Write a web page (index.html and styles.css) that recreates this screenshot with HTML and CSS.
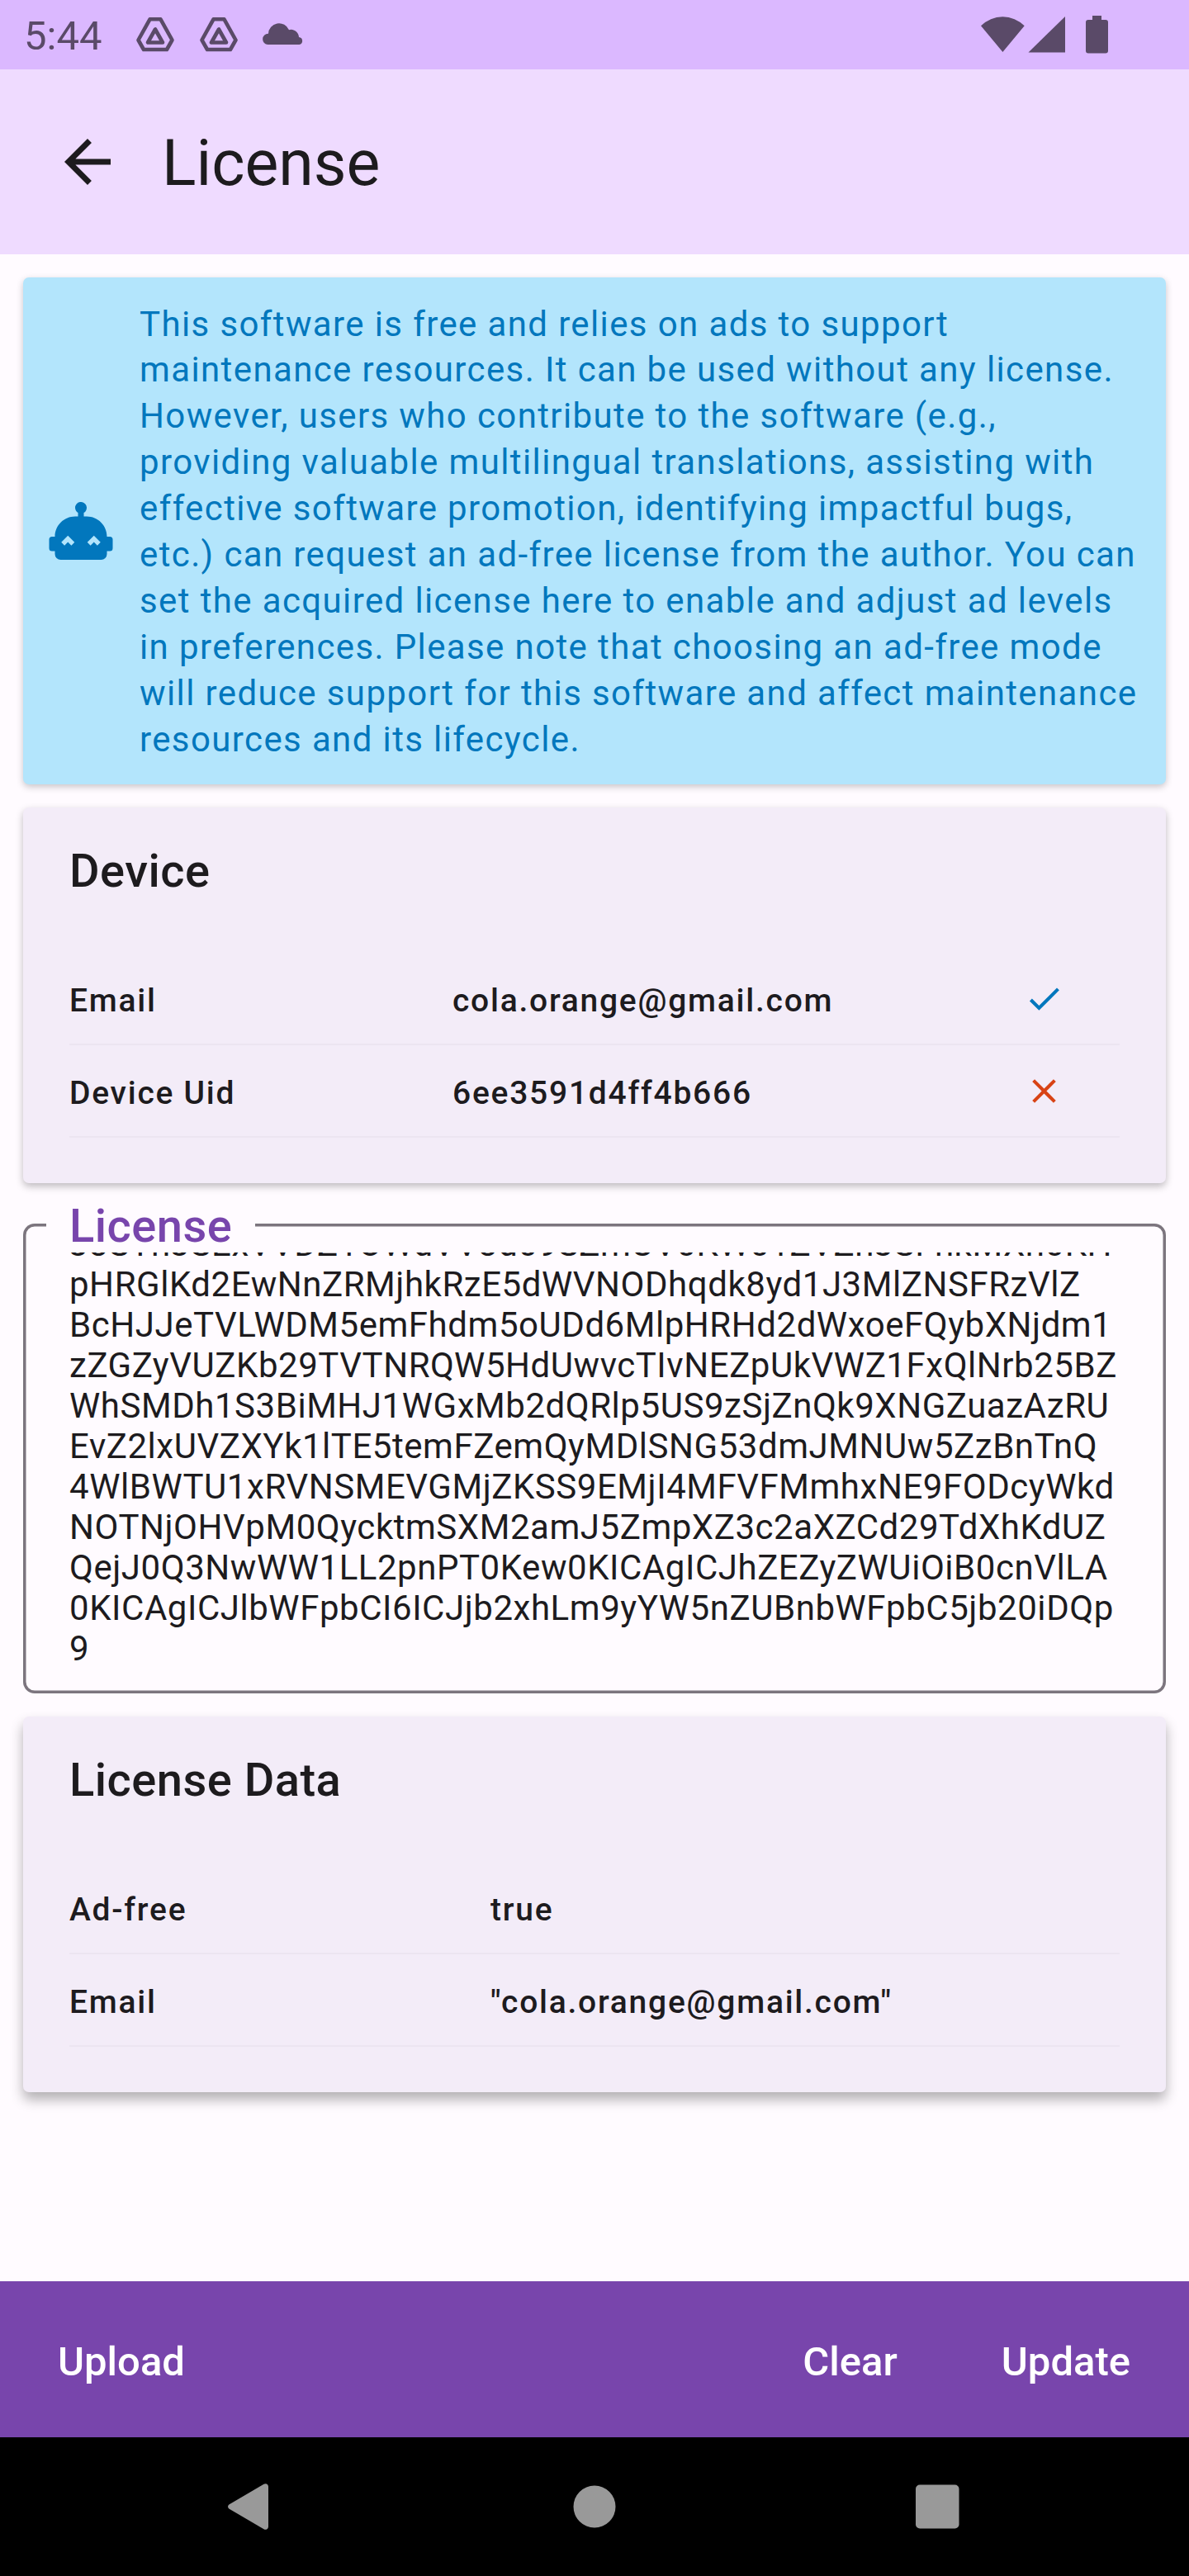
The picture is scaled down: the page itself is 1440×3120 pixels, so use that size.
FILE: index.html
```html
<!DOCTYPE html>
<html lang="en">
<head>
<meta charset="utf-8">
<title>License</title>
<link rel="stylesheet" href="styles.css">
</head>
<body>
<div class="screen">
  <div class="status-bar">
    <span class="clock">5:44</span>
    <svg class="drive" viewBox="0 0 48 44"><g fill="none" stroke="currentColor" stroke-width="4.6" stroke-linejoin="round"><path d="M17.5 3.3h13L44.5 28.500l-6.500 11.500h-28L3.500 28.500z"/><path d="M24 15.500l-9 16h18z"/></g></svg>
    <svg class="drive" viewBox="0 0 48 44"><g fill="none" stroke="currentColor" stroke-width="4.6" stroke-linejoin="round"><path d="M17.5 3.3h13L44.5 28.500l-6.500 11.500h-28L3.500 28.500z"/><path d="M24 15.500l-9 16h18z"/></g></svg>
    <svg class="cloud" viewBox="0 0 49 27"><path fill="currentColor" d="M6.500 27a6.500 6.500 0 0 1 .5-13.200A13 13 0 0 1 32 9.200a9.500 9.500 0 0 1 12 8.900A4.500 4.500 0 0 1 44.500 27z"/></svg>
    <span class="grow"></span>
    <svg class="signals" viewBox="0 0 156 48"><g fill="currentColor"><path d="M0 13.300A37 37 0 0 1 52.700 13.300L26.400 45z"/><path d="M102 2v43.500H57.500z"/><path d="M135 1h11v5h5a3 3 0 0 1 3 3v34.500a3 3 0 0 1-3 3h-21a3 3 0 0 1-3-3V9a3 3 0 0 1 3-3h5z"/></g></svg>
  </div>
  <header class="app-bar">
    <svg class="back" viewBox="0 0 24 24"><path fill="currentColor" d="M20 11H7.830l5.590-5.590L12 4l-8 8 8 8 1.410-1.410L7.830 13H20v-2z"/></svg>
    <h1>License</h1>
  </header>
  <main class="content">
    <section class="banner">
      <svg class="robot" viewBox="0 0 24 24"><path fill="currentColor" d="M22 14h-1c0-3.870-3.130-7-7-7h-1V5.730A2 2 0 1 0 10 4c0 .740.400 1.390 1 1.730V7h-1c-3.870 0-7 3.130-7 7H2a1 1 0 0 0-1 1v3a1 1 0 0 0 1 1h1v1a2 2 0 0 0 2 2h14a2 2 0 0 0 2-2v-1h1a1 1 0 0 0 1-1v-3a1 1 0 0 0-1-1M8.680 17.040 7.500 15.860l-1.180 1.180-1.110-1.110L7.500 13.640l2.290 2.290zm9 0-1.180-1.180-1.180 1.180-1.110-1.110 2.290-2.290 2.290 2.290z"/></svg>
      <p><span class="lead">This software is free and relies on ads to support</span>maintenance resources. It can be used without any license.<br>However, users who contribute to the software (e.g.,<br>providing valuable multilingual translations, assisting with<br>effective software promotion, identifying impactful bugs,<br>etc.) can request an ad-free license from the author. You can<br>set the acquired license here to enable and adjust ad levels<br>in preferences. Please note that choosing an ad-free mode<br>will reduce support for this software and affect maintenance<br>resources and its lifecycle.</p>
    </section>
    <section class="card device">
      <h2>Device</h2>
      <div class="row"><span>Email</span><span>cola.orange@gmail.com</span><svg class="mark ok" viewBox="0 0 24 24"><path fill="currentColor" d="M9 16.170 4.830 12l-1.420 1.410L9 19 21 7l-1.410-1.410z"/></svg></div>
      <div class="row"><span>Device Uid</span><span>6ee3591d4ff4b666</span><svg class="mark bad" viewBox="0 0 24 24"><path fill="currentColor" d="M19 6.410 17.590 5 12 10.590 6.410 5 5 6.410 10.590 12 5 17.590 6.410 19 12 13.410 17.590 19 19 17.590 13.410 12z"/></svg></div>
    </section>
    <section class="field">
      <span class="field-label">License</span>
      <div class="field-text"><p>J3SYhJSExVVDZ1OWdVV3d09SZmUV0KW01ZVZhJSFhkMXh0KH<br>pHRGlKd2EwNnZRMjhkRzE5dWVNODhqdk8yd1J3MlZNSFRzVlZ<br>BcHJJeTVLWDM5emFhdm5oUDd6MlpHRHd2dWxoeFQybXNjdm1<br>zZGZyVUZKb29TVTNRQW5HdUwvcTIvNEZpUkVWZ1FxQlNrb25BZ<br>WhSMDh1S3BiMHJ1WGxMb2dQRlp5US9zSjZnQk9XNGZuazAzRU<br>EvZ2lxUVZXYk1lTE5temFZemQyMDlSNG53dmJMNUw5ZzBnTnQ<br>4WlBWTU1xRVNSMEVGMjZKSS9EMjI4MFVFMmhxNE9FODcyWkd<br>NOTNjOHVpM0QycktmSXM2amJ5ZmpXZ3c2aXZCd29TdXhKdUZ<br>QejJ0Q3NwWW1LL2pnPT0Kew0KICAgICJhZEZyZWUiOiB0cnVlLA<br>0KICAgICJlbWFpbCI6ICJjb2xhLm9yYW5nZUBnbWFpbC5jb20iDQp<br>9</p></div>
    </section>
    <section class="card data">
      <h2>License Data</h2>
      <div class="row"><span>Ad-free</span><span>true</span></div>
      <div class="row"><span>Email</span><span>"cola.orange@gmail.com"</span></div>
    </section>
  </main>
  <footer class="actions">
    <span>Upload</span><span class="grow"></span><span>Clear</span><span>Update</span>
  </footer>
  <nav class="nav-bar">
    <svg viewBox="0 0 60 60"><path fill="currentColor" d="M48.500 2.800A3.500 3.500 0 0 1 54 5.500v49a3.500 3.500 0 0 1-5.500 2.700L6.300 32.500a3.500 3.500 0 0 1 0-5z"/></svg>
    <svg viewBox="0 0 60 60"><circle cx="30" cy="30" r="25.500" fill="currentColor"/></svg>
    <svg viewBox="0 0 60 60"><rect x="0" y="3.500" width="52.500" height="53" rx="5" fill="currentColor"/></svg>
  </nav>
</div>
</body>
</html>
```
FILE: styles.css
```css
* { box-sizing: border-box; margin: 0; padding: 0; }
body { font-family: Roboto, "Liberation Sans", sans-serif; background: #fffbff; color: #1d1b1e; }
svg { display: block; flex: none; }
.grow { flex: 1; }
.screen { width: 1440px; height: 3120px; display: flex; flex-direction: column; overflow: hidden; }

.status-bar { height: 84px; flex: none; background: #dbb8ff; color: #5a4a68; display: flex; align-items: flex-start; padding: 0 96px 0 29px; }
.clock { font-size: 49px; line-height: 58px; padding-top: 15px; width: 135px; }
.drive { width: 48px; height: 44px; margin: 20px 29px 0 0; }
.cloud { width: 49px; height: 27px; margin-top: 27px; }
.signals { width: 156px; height: 48px; margin-top: 18px; }

.app-bar { height: 224px; flex: none; background: #efdbff; display: flex; align-items: center; gap: 48px; padding-left: 64px; }
.back { width: 84px; height: 84px; }
h1 { font-size: 77px; line-height: 98px; font-weight: 400; padding-top: 3px; }

.content { flex: 1; padding: 28px; }
.banner { height: 614px; display: flex; align-items: center; gap: 29px; padding: 0 28px; background: #b3e5fc; color: #0277bd; border-radius: 7px; box-shadow: 0 3px 9px rgba(0,0,0,.22); }
.robot { width: 84px; height: 84px; }
.banner p { padding-top: 4px; font-size: 42px; line-height: 56px; letter-spacing: 1.380px; white-space: nowrap; }
.lead { display: block; line-height: 54px; }

.card { height: 455px; margin-top: 28px; padding: 45px 56px 0; background: #f3ecf8; border-radius: 7px; box-shadow: 0 4px 10px rgba(0,0,0,.26); }
.card h2 { height: 131px; font-size: 56px; line-height: 64px; font-weight: 500; letter-spacing: .5px; }
.row { height: 112px; display: grid; align-items: center; border-bottom: 2px solid #ece5f1; font-size: 39px; line-height: 56px; font-weight: 500; letter-spacing: 1.750px; white-space: nowrap; }
.row span { padding-top: 6px; }
.device .row { grid-template-columns: 464px 692px 1fr; }
.data .row { grid-template-columns: 510px 1fr; }
.data { box-shadow: 0 9px 15px rgba(0,0,0,.3); }
.mark { width: 49px; height: 49px; }
.ok { color: #0277bd; }
.bad { color: #d84315; }

.field { position: relative; height: 569px; margin-top: 49px; padding: 35px 56px 0; border-radius: 14px; box-shadow: inset 0 0 0 3.500px #7c757e; }
.field-label { position: absolute; left: 28px; top: -29px; padding: 0 28px; height: 62px; line-height: 64px; background: #fffbff; color: #7845ac; font-size: 56px; font-weight: 500; letter-spacing: .5px; }
.field-text { height: 504px; overflow: hidden; display: flex; align-items: flex-end; }
.field-text p { font-size: 42px; line-height: 49px; letter-spacing: .540px; white-space: nowrap; }

.actions { height: 189px; flex: none; background: #7845ac; color: #fff; display: flex; align-items: center; padding: 5px 71px 0 70px; font-size: 49px; font-weight: 500; gap: 126px; }
.nav-bar { height: 168px; flex: none; background: #000; color: #999; display: flex; align-items: center; justify-content: space-between; padding: 0 271px; }
.nav-bar svg { width: 60px; height: 60px; }
```
